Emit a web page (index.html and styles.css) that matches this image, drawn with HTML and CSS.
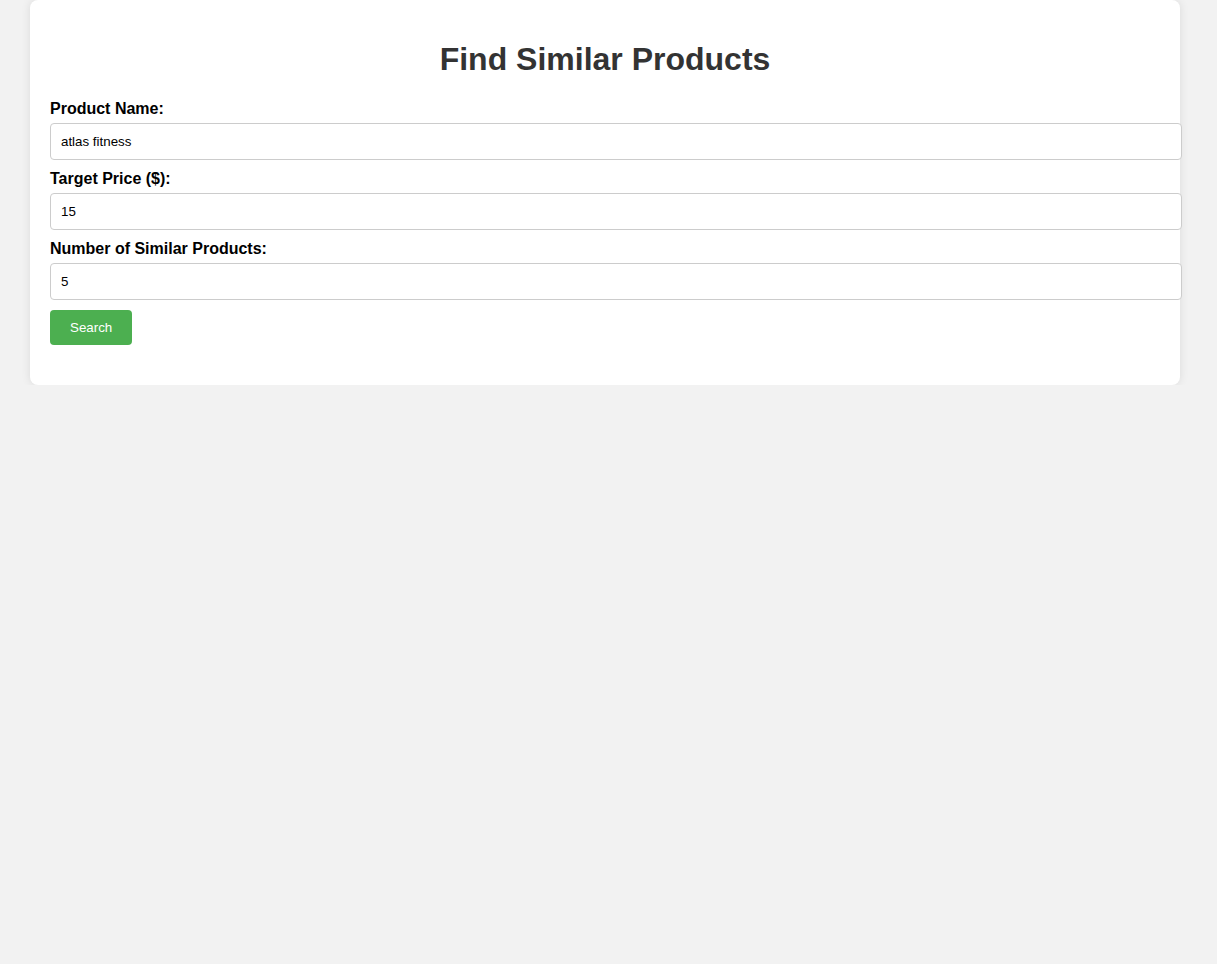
FILE: index.html
```html
<!DOCTYPE html>
<html lang="en">
<head>
<meta charset="utf-8">
<title>Find Similar Products</title>
<link rel="stylesheet" href="styles.css">
</head>
<body>
<div class="container">
  <h1 class="title">Find Similar Products</h1>
  <form class="form">
    <label class="label" for="name">Product Name:</label>
    <input class="input" id="name" type="text" value="atlas fitness">
    <label class="label" for="price">Target Price ($):</label>
    <input class="input" id="price" type="text" value="15">
    <label class="label" for="count">Number of Similar Products:</label>
    <input class="input" id="count" type="text" value="5">
    <button class="button" type="button">Search</button>
  </form>
  <div class="results"></div>
</div>
</body>
</html>
```
FILE: styles.css
```css
html, body {
  margin: 0;
  padding: 0;
}
body {
  background: #f2f2f2;
  font-family: "Liberation Sans", Arial, sans-serif;
}
.container {
  box-sizing: border-box;
  width: 1150px;
  margin: 0 0 0 30px;
  padding: 20px;
  background: #fff;
  border-radius: 8px;
  box-shadow: 0 0 10px rgba(0, 0, 0, 0.1);
}
.title {
  text-align: center;
  color: #333;
  font-size: 32px;
  margin: 21.44px 0;
}
.form {
  margin: 0;
}
.label {
  display: block;
  font-weight: bold;
  font-size: 16px;
  margin-bottom: 5px;
  color: #000;
}
.input {
  display: block;
  width: 100%;
  padding: 10px;
  margin: 0 0 10px 0;
  border: 1px solid #ccc;
  border-radius: 4px;
  font-family: "Liberation Sans", Arial, sans-serif;
  font-size: 13.333px;
  color: #000;
  background: #fff;
}
.button {
  display: block;
  background: #4caf50;
  color: #fff;
  border: none;
  border-radius: 4px;
  padding: 10px 20px;
  font-family: "Liberation Sans", Arial, sans-serif;
  font-size: 13.333px;
  cursor: pointer;
}
.results {
  margin-top: 20px;
}
```
